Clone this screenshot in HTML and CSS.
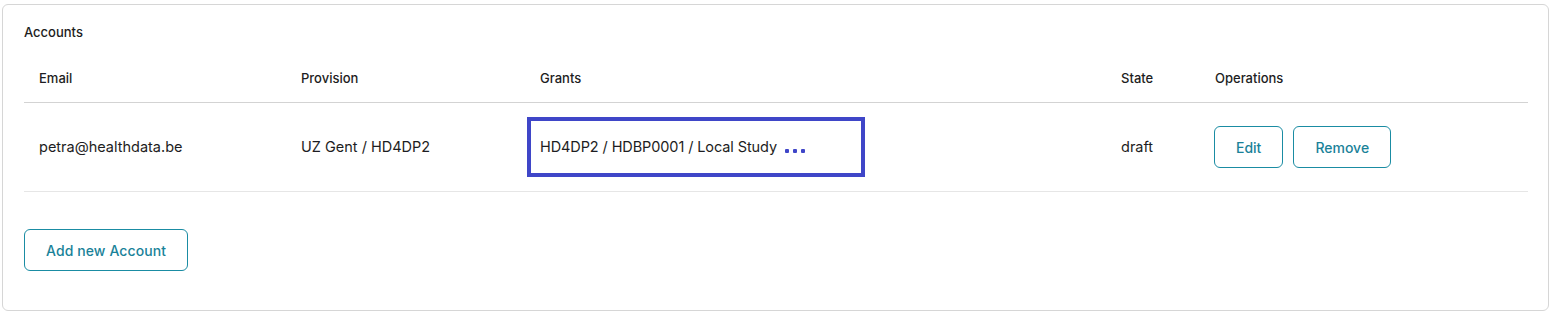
FILE: index.html
```html
<!DOCTYPE html>
<html>
<head>
<meta charset="utf-8">
<link rel="stylesheet" href="styles.css">
</head>
<body>
<section class="card">
  <h2 class="title">Accounts</h2>
  <div class="table">
    <div class="row head">
      <div class="cell">Email</div>
      <div class="cell">Provision</div>
      <div class="cell">Grants</div>
      <div class="cell">State</div>
      <div class="cell">Operations</div>
    </div>
    <div class="row body">
      <div class="cell">petra@healthdata.be</div>
      <div class="cell">UZ Gent / HD4DP2</div>
      <div class="cell grants">
        <div class="highlight"><span class="hl-text">HD4DP2 / HDBP0001 / Local Study</span><span class="dots"><i></i><i></i><i></i></span></div>
      </div>
      <div class="cell">draft</div>
      <div class="cell ops">
        <button class="btn">Edit</button>
        <button class="btn">Remove</button>
      </div>
    </div>
  </div>
  <button class="btn add">Add new Account</button>
</section>
</body>
</html>
```
FILE: styles.css
```css
* { box-sizing: border-box; }
body {
  margin: 0;
  font-family: Inter, "Noto Sans", sans-serif;
  color: #1d1d22;
  background: #fff;
}
.card {
  margin: 4px 0 0 2px;
  width: 1547px;
  height: 307px;
  border: 1px solid #d6d6d6;
  border-radius: 6px;
  padding: 19px 20px 0 21px;
}
.title {
  margin: 0;
  font-size: 13px;
  line-height: 16px;
  font-weight: 500;
}
.table {
  margin-top: 13px;
}
.row {
  display: grid;
  grid-template-columns: 262px 239px 581px 94px 1fr;
  align-items: center;
}
.head {
  height: 50px;
  border-bottom: 1px solid #d3d3d3;
  font-size: 13px;
  font-weight: 500;
}
.body {
  height: 89px;
  border-bottom: 1px solid #e6e6e6;
  font-size: 14.5px;
}
.cell {
  padding-left: 15px;
}
.body .cell { padding-bottom: 2px; }
.grants { padding-left: 2px; }
.body .grants { padding-bottom: 0; }
.highlight {
  width: 338px;
  height: 60px;
  border: 4px solid #3f46c8;
  padding-left: 9px;
  padding-bottom: 1px;
  display: flex;
  align-items: center;
}
.hl-text { letter-spacing: -0.1px; }
.dots {
  display: inline-flex;
  gap: 4px;
  margin-left: 8px;
  margin-top: 8px;
}
.dots i {
  width: 4px;
  height: 4px;
  background: #3f46c8;
  border-radius: 1px;
}
.ops {
  display: flex;
  gap: 10px;
  padding-left: 14px;
}
.body .ops { padding-bottom: 0; }
.btn {
  font-family: Inter, "Noto Sans", sans-serif;
  font-size: 14px;
  font-weight: 500;
  color: #1a8299;
  background: #fff;
  border: 1px solid #1a8ca3;
  border-radius: 6px;
  height: 42px;
  padding: 0 21px;
}
.add {
  margin-top: 37px;
  letter-spacing: 0.1px;
}
```
